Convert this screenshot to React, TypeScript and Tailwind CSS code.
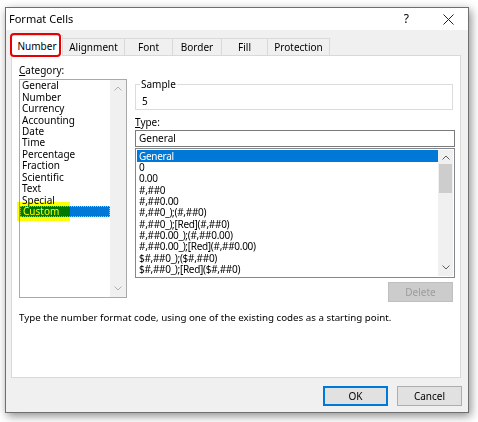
import React from "react";

const categories = [
  "General",
  "Number",
  "Currency",
  "Accounting",
  "Date",
  "Time",
  "Percentage",
  "Fraction",
  "Scientific",
  "Text",
  "Special",
  "Custom",
];

const formats = [
  "General",
  "0",
  "0.00",
  "#,##0",
  "#,##0.00",
  "#,##0_);(#,##0)",
  "#,##0_);[Red](#,##0)",
  "#,##0.00_);(#,##0.00)",
  "#,##0.00_);[Red](#,##0.00)",
  "$#,##0_);($#,##0)",
  "$#,##0_);[Red]($#,##0)",
];

const tabs = [
  { label: "Alignment", w: "w-[62px]" },
  { label: "Font", w: "w-[48px]" },
  { label: "Border", w: "w-[49px]" },
  { label: "Fill", w: "w-[46px]" },
  { label: "Protection", w: "w-[62px]" },
];

function Chevron({ up, color }: { up?: boolean; color: string }) {
  return (
    <svg width="8" height="5" viewBox="0 0 8 5" fill="none">
      <path
        d={up ? "M0.5 4.5 L4 1 L7.5 4.5" : "M0.5 0.5 L4 4 L7.5 0.5"}
        stroke={color}
        strokeWidth="1"
      />
    </svg>
  );
}

export default function App() {
  return (
    <div
      className="relative h-[422px] w-[478px] overflow-hidden bg-white pl-[5px] pt-[7px] text-black"
      style={{ fontFamily: '"Noto Sans", "Open Sans", sans-serif' }}
    >
      <div className="flex h-[406px] w-[464px] flex-col border border-[#6f6f6f] bg-[#f0f0f0] shadow-[2px_3px_9px_rgba(0,0,0,0.45)]">
        {/* title bar */}
        <div className="flex h-[22px] items-center bg-white pl-[3px] text-[11px]">
          <span>Format Cells</span>
          <span className="ml-auto mr-[34px] text-[12px]">?</span>
          <svg width="11" height="11" viewBox="0 0 11 11" className="mr-[14px]">
            <path d="M0.5 0.5 L10.5 10.5 M10.5 0.5 L0.5 10.5" stroke="#222" strokeWidth="1" />
          </svg>
        </div>

        {/* tabs */}
        <div className="relative ml-[5px] mt-[5px] flex h-[20px] items-end text-[10px]">
          <div className="relative z-10 -mb-px flex h-[21px] w-[52px] items-center justify-center border border-b-0 border-[#d9d9d9] bg-white">
            Number
          </div>
          {tabs.map((t) => (
            <div
              key={t.label}
              className={`flex h-[17px] ${t.w} items-center justify-center border border-l-0 border-b-0 border-[#d9d9d9] bg-[#f0f0f0] first:border-l`}
            >
              {t.label}
            </div>
          ))}
          <div className="pointer-events-none absolute left-[-1px] top-[-2px] z-20 h-[24px] w-[51px] rounded-[4px] border-[2.5px] border-[#e60000]" />
        </div>

        {/* panel */}
        <div className="ml-[5px] flex h-[323px] w-[450px] flex-col border border-[#d9d9d9] bg-white text-[10px]">
          <div className="flex">
            {/* category column */}
            <div className="ml-[7px] flex flex-col pt-[8px]">
              <div className="h-[12px] leading-[12px]">
                <span className="underline">C</span>ategory:
              </div>
              <div className="relative mt-[3px] flex h-[219px] w-[108px] border border-[#a9a9a9]">
                <div className="flex w-[90px] flex-col">
                  {categories.map((c) => (
                    <div
                      key={c}
                      className={`flex h-[11.45px] shrink-0 items-center pl-[2px] leading-[11px] ${
                        c === "Custom"
                          ? "border border-dotted border-[#99c9ef] bg-[#0078d7] pl-[1px] text-white"
                          : ""
                      }`}
                    >
                      {c}
                    </div>
                  ))}
                </div>
                <div className="flex w-[16px] flex-col items-center justify-between bg-[#f0f0f0] py-[6px]">
                  <Chevron up color="#b0b0b0" />
                  <Chevron color="#b0b0b0" />
                </div>
                <div className="pointer-events-none absolute left-[-3px] top-[122px] h-[19px] w-[53px] bg-[#ffff00] mix-blend-multiply" />
              </div>
            </div>

            {/* right column */}
            <div className="ml-[8px] flex w-[320px] flex-col">
              <fieldset className="mt-[22px] h-[32px] w-[318px] border border-[#dcdcdc] px-[4px]">
                <legend className="px-[1px] leading-[12px]">Sample</legend>
                <div className="mt-[5px] pl-[2px] leading-[12px]">5</div>
              </fieldset>
              <div className="mt-[6px] h-[12px] leading-[12px]">
                <span className="underline">T</span>ype:
              </div>
              <div className="mt-[2px] flex h-[17px] items-center border border-[#7a7a7a] pl-[3px]">
                General
              </div>
              <div className="mt-px flex h-[130px] border border-[#828790] p-px">
                <div className="flex flex-1 flex-col tracking-[-0.3px]">
                  {formats.map((f, i) => (
                    <div
                      key={f}
                      className={`flex h-[11.3px] shrink-0 items-center pl-[2px] leading-[11px] ${
                        i === 0 ? "h-[12px] bg-[#0078d7] text-white" : ""
                      }`}
                    >
                      {f}
                    </div>
                  ))}
                </div>
                <div className="flex w-[15px] flex-col items-center bg-[#f0f0f0] pt-[5px]">
                  <Chevron up color="#606060" />
                  <div className="mt-[4px] h-[29px] w-[13px] bg-[#cdcdcd]" />
                  <div className="mt-auto mb-[6px]">
                    <Chevron color="#606060" />
                  </div>
                </div>
              </div>
              <div className="mt-[4px] flex justify-end pr-[2px]">
                <div className="flex h-[20px] w-[65px] items-center justify-center border border-[#bfbfbf] bg-[#cccccc] text-[#9c9c9c]">
                  Delete
                </div>
              </div>
            </div>
          </div>

          <div className="ml-[7px] mt-[10px] text-[9.75px] leading-[12px]">
            Type the number format code, using one of the existing codes as a starting point.
          </div>
        </div>

        {/* footer */}
        <div className="mt-[8px] flex justify-end gap-[9px] pr-[6px] text-[10px]">
          <div className="flex h-[20px] w-[65px] items-center justify-center border-2 border-[#0078d7] bg-[#e1e1e1]">
            OK
          </div>
          <div className="flex h-[20px] w-[65px] items-center justify-center border border-[#adadad] bg-[#e1e1e1]">
            Cancel
          </div>
        </div>
      </div>
    </div>
  );
}
